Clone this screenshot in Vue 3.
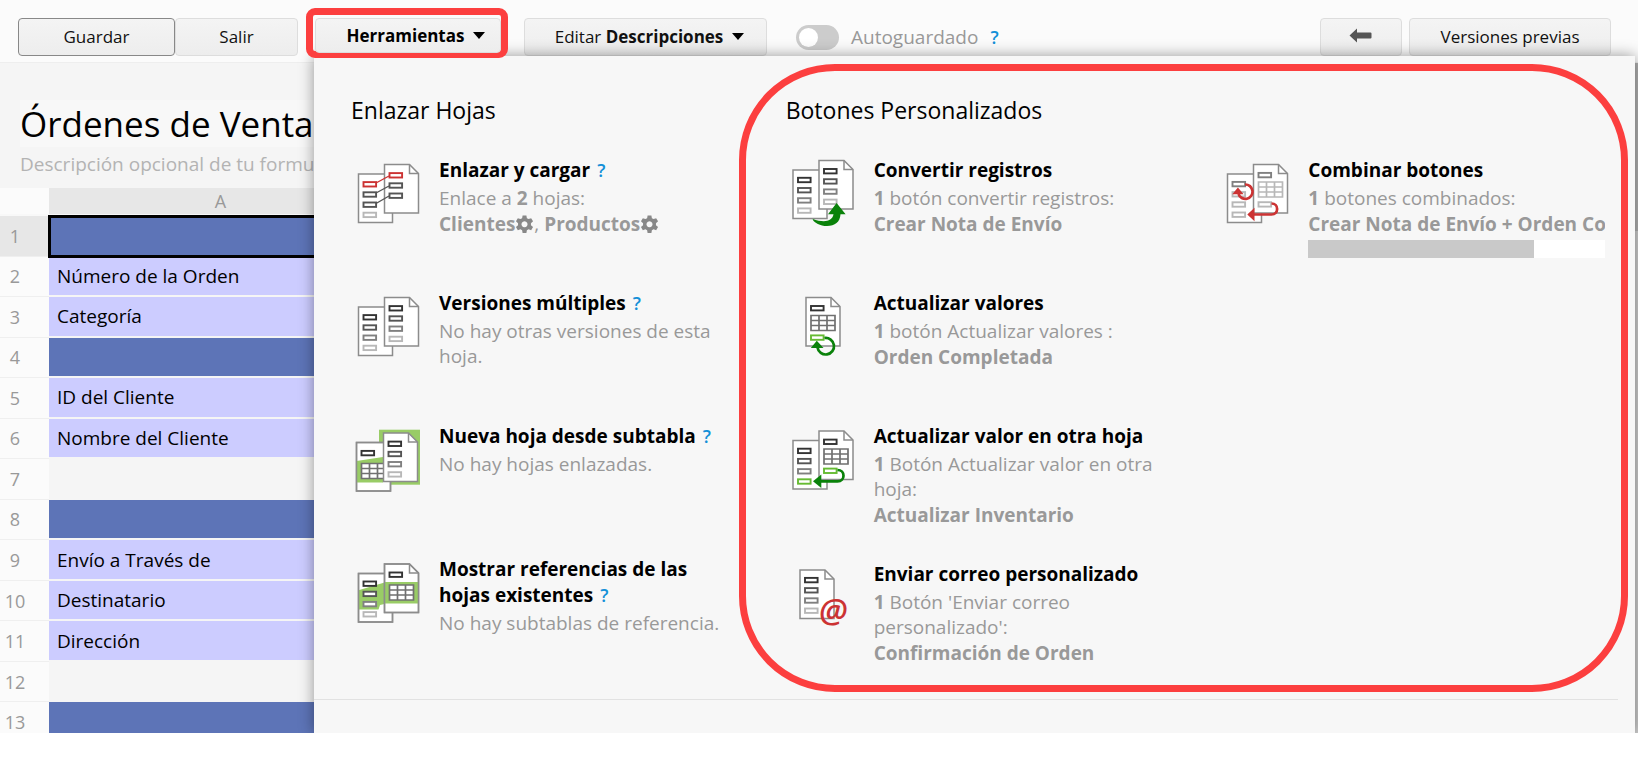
<template>
  <div class="app">
    <header class="toolbar">
      <button type="button" class="btn btn-save">Guardar</button>
      <button type="button" class="btn btn-exit">Salir</button>
      <div class="tools-wrap">
        <button type="button" class="btn btn-tools" @click="menuOpen = !menuOpen">
          <b>Herramientas</b><span class="caret"></span>
        </button>
      </div>
      <button type="button" class="btn btn-edit">Editar&nbsp;<b>Descripciones</b><span class="caret"></span></button>
      <label class="autosave">
        <input v-model="autosave" type="checkbox" class="switch" />
        <span>Autoguardado</span>
      </label>
      <a href="#" class="help">?</a>
      <span class="spacer"></span>
      <button type="button" class="btn btn-back" aria-label="Volver">
        <svg viewBox="0 0 24 16" width="24" height="16">
          <path d="M0.5 7.5 L8 0.5 V4.5 H21.5 Q22.5 4.5 22.5 5.5 V9.5 Q22.5 10.5 21.5 10.5 H8 V14.5 Z" fill="#555" />
        </svg>
      </button>
      <button type="button" class="btn btn-versions">Versiones previas</button>
    </header>

    <main class="content">
      <div class="form-head">
        <input v-model="title" type="text" class="form-title" aria-label="Título" />
        <input type="text" class="form-desc" placeholder="Descripción opcional de tu formulario" aria-label="Descripción" />
      </div>
      <table class="sheet">
        <thead>
          <tr>
            <th class="corner"></th>
            <th class="col-name">A</th>
            <th class="col-rest"></th>
          </tr>
        </thead>
        <tbody>
          <tr v-for="(row, i) in rows" :key="i" :class="{ selected: i === 0 }">
            <th class="row-no">{{ i + 1 }}</th>
            <td :class="row.type">{{ row.text }}</td>
            <td :class="row.type"></td>
          </tr>
        </tbody>
      </table>
      <span class="scroll-track"><span class="scroll-thumb"></span></span>
    </main>

    <div v-if="menuOpen" class="menu">
      <div class="menu-grid">
        <section v-for="section in sections" :key="section.title" :class="['section', section.kind]">
          <h2>{{ section.title }}</h2>
          <div class="columns">
            <div v-for="(column, c) in section.columns" :key="c" class="column">
              <article v-for="item in column" :key="item.title" class="item">
                <svg class="icon" viewBox="0 0 72 72" width="72" height="72">
                  <rect v-if="item.icon.halo" x="28" y="6.7" width="41" height="55" fill="#9c6" />
                  <g v-for="(page, p) in item.icon.pages" :key="p">
                    <path :d="pagePath(page)" fill="#fff" stroke="#8c8c8c" stroke-width="1.5" />
                    <path v-if="page.band" :d="page.band" fill="#9c6" />
                    <path v-if="page.band" :d="pagePath(page)" fill="none" stroke="#8c8c8c" stroke-width="1.5" />
                    <path
                      v-if="page.fold"
                      :d="`M${page.x + 25} ${page.y} v9 h9`"
                      fill="none"
                      stroke="#8c8c8c"
                      stroke-width="1.5"
                    />
                    <rect
                      v-for="(box, b) in page.boxes"
                      :key="b"
                      :x="page.x + 5"
                      :y="box[0] - 2.1"
                      width="12.6"
                      height="4.4"
                      fill="#fff"
                      :stroke="box[1]"
                      stroke-width="1.9"
                    />
                    <path
                      v-if="page.table"
                      :d="`M${page.x + 5} ${page.table} h24 v15 h-24 z m0 5 h24 m-24 5 h24 m-16 -10 v15 m8 -15 v15`"
                      fill="#fff"
                      :stroke="page.tableColor || '#707070'"
                      stroke-width="1.7"
                    />
                  </g>
                  <path v-if="item.icon.line" :d="item.icon.line" fill="none" :stroke="item.icon.color" stroke-width="2.7" />
                  <path v-if="item.icon.solid" :d="item.icon.solid" :fill="item.icon.color" />
                  <g v-if="item.icon.links" fill="none" stroke-width="1.4">
                    <path d="M25 26 L38 19" stroke="#c33" />
                    <path d="M25 36 L38 29 M25 46.500 L38 39" stroke="#555" />
                  </g>
                  <text v-if="item.icon.at" x="33" y="61" class="at">@</text>
                </svg>
                <div class="text">
                  <h3>{{ item.title }}<a v-if="item.help" href="#" class="help">?</a></h3>
                  <p>{{ item.lead }} <b v-if="item.count">{{ item.count }}</b> {{ item.desc }}</p>
                  <p v-if="item.links" class="links" :class="{ scrolling: item.scroll }">
                    <template v-for="(link, l) in item.links" :key="link">
                      <span v-if="l">, </span><b>{{ link }}</b><svg v-if="item.gears" class="gear" viewBox="0 0 20 20" width="19" height="19">
                        <path :d="gearPath" fill="#888" fill-rule="evenodd" />
                      </svg>
                    </template>
                  </p>
                  <div v-if="item.scroll" class="h-scroll"><span></span></div>
                </div>
              </article>
            </div>
          </div>
        </section>
      </div>
    </div>
  </div>
</template>

<script setup>
import { ref } from 'vue'

const menuOpen = ref(true)
const autosave = ref(false)
const title = ref('Órdenes de Ventas')

const rows = [
  { type: 'section-row', text: '' },
  { type: 'label-row', text: 'Número de la Orden' },
  { type: 'label-row', text: 'Categoría' },
  { type: 'section-row', text: '' },
  { type: 'label-row', text: 'ID del Cliente' },
  { type: 'label-row', text: 'Nombre del Cliente' },
  { type: 'empty-row', text: '' },
  { type: 'section-row', text: '' },
  { type: 'label-row', text: 'Envío a Través de' },
  { type: 'label-row', text: 'Destinatario' },
  { type: 'label-row', text: 'Dirección' },
  { type: 'empty-row', text: '' },
  { type: 'section-row', text: '' },
]

const dark = '#333'
const mid = '#555'
const gray = '#808080'
const light = '#b8b8b8'
const lime = '#6b3'
const green = '#0a820a'
const red = '#c33'

const gearPath =
  'M8 .5 h4 l.5 2.800 1.800 1 2.700-1 2 3.400 -2.200 1.900 v2.200 l2.200 1.900 -2 3.400 -2.700-1 -1.800 1 -.5 2.800 h-4 l-.5-2.800 -1.800-1 -2.700 1 -2-3.400 2.200-1.900 v-2.200 l-2.200-1.900 2-3.400 2.700 1 1.800-1 z M10 6.600 a3.200 3.200 0 1 0 .01 0 z'

// every page is 34 wide, the front one has a folded corner
function pagePath(page) {
  return page.fold
    ? `M${page.x} ${page.y} h25 l9 9 v39.500 h-34 z`
    : `M${page.x} ${page.y} h34 v48.500 h-34 z`
}

function fade(start, colors) {
  return colors.map((color, i) => [start + i * 10.2, color])
}

const sections = [
  {
    title: 'Enlazar Hojas',
    kind: 'link-section',
    columns: [
      [
        {
          title: 'Enlazar y cargar',
          help: true,
          lead: 'Enlace a',
          count: 2,
          desc: 'hojas:',
          links: ['Clientes', 'Productos'],
          gears: true,
          icon: {
            links: true,
            pages: [
              { x: 7.5, y: 17, boxes: fade(27.2, [red, mid, mid, light]) },
              { x: 33.5, y: 7.5, fold: true, boxes: fade(18.2, [red, mid, mid]) },
            ],
          },
        },
        {
          title: 'Versiones múltiples',
          help: true,
          desc: 'No hay otras versiones de esta hoja.',
          icon: {
            pages: [
              { x: 7.5, y: 17, boxes: fade(27.2, [dark, mid, gray, light]) },
              { x: 33.5, y: 7.5, fold: true, boxes: fade(18.2, [dark, mid, gray, light]) },
            ],
          },
        },
        {
          title: 'Nueva hoja desde subtabla',
          help: true,
          desc: 'No hay hojas enlazadas.',
          icon: {
            halo: true,
            pages: [
              { x: 5.5, y: 19.5, boxes: [[30, dark]], table: 40.5, band: 'M5.500 38 L32 34 V59.500 H5.500 z' },
              { x: 32.5, y: 10, fold: true, boxes: fade(20.7, [dark, mid, gray, light]) },
            ],
          },
        },
        {
          title: 'Mostrar referencias de las hojas existentes',
          help: true,
          desc: 'No hay subtablas de referencia.',
          icon: {
            pages: [
              {
                x: 7.5,
                y: 17.5,
                boxes: fade(27.6, [dark, mid, gray, light]),
                band: 'M7.500 34.300 L33.500 26.500 V48 L29 49 L27.500 53.500 H7.500 z',
              },
              { x: 33.5, y: 8, fold: true, boxes: [[18.6, dark]], table: 29, band: 'M33.500 26 h34 v21.500 h-34 z' },
            ],
          },
        },
      ],
    ],
  },
  {
    title: 'Botones Personalizados',
    kind: 'button-section',
    columns: [
      [
        {
          title: 'Convertir registros',
          count: 1,
          desc: 'botón convertir registros:',
          links: ['Crear Nota de Envío'],
          icon: {
            pages: [
              { x: 7, y: 13, boxes: fade(22.9, [dark, mid, gray, light]) },
              { x: 33, y: 3.5, fold: true, boxes: fade(14.1, [dark, mid, gray, light]) },
            ],
            color: green,
            solid: 'M50.600 46 L59.600 57.300 H54.500 C54 65.300 49 69 41 69 C34 69 28.500 65.700 26.800 62.700 V62 C37 65.700 46 65.300 47.500 57.300 H42 z',
          },
        },
        {
          title: 'Actualizar valores',
          count: 1,
          desc: 'botón Actualizar valores :',
          links: ['Orden Completada'],
          icon: {
            pages: [{ x: 20, y: 7.5, fold: true, boxes: [[18.1, dark], [47.5, lime]], table: 25.5 }],
            color: green,
            line: 'M38.500 48 A8.300 8.300 0 1 1 31.500 57.500',
            solid: 'M30.800 50.700 L37.500 58.100 H24.800 z',
          },
        },
        {
          title: 'Actualizar valor en otra hoja',
          count: 1,
          desc: 'Botón Actualizar valor en otra hoja:',
          links: ['Actualizar Inventario'],
          icon: {
            pages: [
              { x: 7, y: 17.5, boxes: fade(27.8, [dark, mid, gray, lime]) },
              { x: 33, y: 8, fold: true, boxes: [[18.7, dark], [47.7, lime]], table: 26 },
            ],
            color: green,
            line: 'M51.500 47 C59.500 47 59.500 58.300 51.500 58.300 H34',
            solid: 'M27 58.300 L35.300 51.500 V65 z',
          },
        },
        {
          title: 'Enviar correo personalizado',
          count: 1,
          desc: "Botón 'Enviar correo personalizado':",
          links: ['Confirmación de Orden'],
          icon: {
            at: true,
            pages: [{ x: 14, y: 9, fold: true, boxes: fade(19, [dark, mid, gray, light]) }],
          },
        },
      ],
      [
        {
          title: 'Combinar botones',
          count: 1,
          desc: 'botones combinados:',
          links: ['Crear Nota de Envío + Orden Completada'],
          scroll: true,
          icon: {
            pages: [
              { x: 7.5, y: 17, boxes: fade(27, [gray, light, light, light]) },
              { x: 33.5, y: 7.5, fold: true, boxes: [[18, gray], [47.3, light]], table: 25, tableColor: '#b8b8b8' },
            ],
            color: red,
            line: 'M25 27.500 A7.200 7.200 0 1 1 18.500 37 M51.500 46.500 C59 46.500 59 57.500 51.500 57.500 H34',
            solid: 'M17.900 30.500 L23.600 37.300 H12.300 z M27.300 57.500 L34.500 50.800 V64.300 z',
          },
        },
      ],
    ],
  },
]
</script>

<style>
body {
  margin: 0;
  background: #fff;
}
</style>

<style scoped>
.app {
  position: relative;
  display: flex;
  flex-direction: column;
  height: calc(100vh - 48px);
  overflow: hidden;
  background: #f5f5f5;
  color: #000;
  font-family: "Open Sans", "Noto Sans", sans-serif;
  font-size: 19px;
}

button,
input {
  box-sizing: border-box;
  font: inherit;
  color: inherit;
}

.toolbar {
  display: flex;
  align-items: flex-start;
  box-sizing: border-box;
  height: 63px;
  flex-shrink: 0;
  padding: 18px 27px 0 18px;
  background: #fbfbfb;
  border-bottom: 1px solid #eee;
}

.btn {
  display: flex;
  align-items: center;
  justify-content: center;
  height: 38px;
  padding: 0 0 2px;
  border: 1px solid #ddd;
  border-radius: 4px;
  background: linear-gradient(#f4f4f4, #ededed);
  color: #111;
  font-size: 17px;
  white-space: nowrap;
  cursor: pointer;
}

.btn-save {
  width: 157px;
  border-color: #888;
}

.btn-exit {
  width: 123px;
}

.tools-wrap {
  position: relative;
  z-index: 3;
  box-sizing: border-box;
  width: 202px;
  height: 50px;
  margin: -10px 16px 0 8px;
  padding: 3px 0 0 2px;
  border: 7px solid #fc3f3f;
  border-radius: 9px;
}

.btn-tools {
  width: 100%;
  height: 35px;
  padding: 0 0 0 16px;
  color: #000;
}

.btn-edit {
  width: 243px;
  padding-left: 8px;
}

.caret {
  margin-left: 9px;
  border: 6px solid transparent;
  border-top: 7px solid #000;
  border-bottom: 0;
}

.autosave {
  display: flex;
  align-items: center;
  gap: 12px;
  height: 38px;
  margin-left: 29px;
  color: #999;
}

.switch {
  appearance: none;
  width: 43px;
  height: 25px;
  margin: 0;
  padding: 3px;
  border-radius: 13px;
  background: #ccc;
}

.switch::before {
  content: "";
  display: block;
  width: 19px;
  height: 19px;
  border-radius: 50%;
  background: #fff;
}

.switch:checked {
  background: #1490d8;
}

.help {
  color: #1490d8;
  font-size: 18px;
  font-weight: 600;
  text-decoration: none;
}

.toolbar .help {
  margin-left: 12px;
  line-height: 38px;
}

.spacer {
  flex: 1;
}

.btn-back {
  width: 82px;
  margin-right: 7px;
}

.btn-versions {
  width: 202px;
}

.content {
  position: relative;
  flex: 1;
}

.form-head {
  box-sizing: border-box;
  height: 125px;
  padding: 37px 0 0 20px;
}

.form-title,
.form-desc {
  display: block;
  width: 100%;
  padding: 0;
  border: 0;
  background: transparent;
}

.form-title {
  height: 47px;
  background: #f8f8f8;
  font-size: 35px;
}

.form-desc {
  height: 34px;
}

.form-desc::placeholder {
  color: #b3b3b3;
  opacity: 1;
}

.sheet {
  width: 100%;
  height: 555px;
  border-collapse: separate;
  border-spacing: 0;
  table-layout: fixed;
}

.sheet th {
  padding: 0;
  font-size: 18px;
  font-weight: 400;
  color: #999;
}

.sheet thead th {
  height: 26px;
  border-bottom: 2px solid #f8f8f8;
  line-height: 26px;
}

.sheet tbody tr {
  height: 40px;
  line-height: 24px;
}

.corner {
  width: 49px;
  background: #fbfbfb;
}

.col-name {
  width: 343px;
  background: #e7e7e7;
}

.col-rest {
  background: #e7e7e7;
}

.sheet .row-no {
  padding-right: 19px;
  background: #fbfbfb;
  border-bottom: 1px solid #efefef;
}

.sheet .selected .row-no {
  background: #e7e7e7;
}

.sheet td {
  padding: 0 8px;
  border-bottom: 2px solid #f5f5f5;
}

.sheet .section-row {
  background: #5d74b7;
}

.sheet .label-row {
  background: #ccf;
}

.sheet .selected td {
  border-bottom: 0;
  outline: 3px solid #000;
  outline-offset: -2px;
}

.scroll-track {
  position: absolute;
  inset: 0 0 0 auto;
  width: 3px;
  background: #ccc;
}

.scroll-thumb {
  display: block;
  height: 168px;
  background: #b0b0b0;
}

.menu {
  position: absolute;
  inset: 56px 3px 0 314px;
  z-index: 2;
  background: #f7f7f7;
  box-shadow: 0 0 14px rgba(0, 0, 0, 0.4);
}

.menu-grid {
  position: relative;
  display: grid;
  grid-template-columns: 1fr 2fr;
  margin-right: 17px;
  padding-bottom: 32px;
  border-bottom: 1px solid #e2e2e2;
}

.section {
  min-width: 0;
}

/* highlighted area round the custom buttons */
.button-section::after {
  content: "";
  position: absolute;
  inset: 8px -10px 7px calc(100% * 1 / 3 - 10px);
  border: 7px solid #fc3f3f;
  border-radius: 96px;
  pointer-events: none;
}

.section h2 {
  margin: 38px 0 31px 37px;
  font-size: 23px;
  font-weight: 400;
  line-height: 32px;
}

.columns {
  display: grid;
  grid-auto-flow: column;
  grid-auto-columns: minmax(0, 1fr);
}

.column {
  display: flex;
  flex-direction: column;
  gap: 32px;
  padding: 0 13px 0 37px;
}

.item {
  display: flex;
  gap: 16px;
  min-height: 101px;
}

.icon {
  flex-shrink: 0;
}

.at {
  fill: #c33;
  font-size: 33px;
  font-style: italic;
  font-weight: 600;
}

.text {
  flex: 1;
  min-width: 0;
}

.item h3 {
  margin: 0 0 3px;
  font-size: 19px;
  font-weight: 700;
  line-height: 26px;
}

.item h3 .help {
  margin-left: 7px;
}

.item p {
  margin: 0;
  color: #999;
  line-height: 25px;
}

.item .links {
  line-height: 27px;
  white-space: nowrap;
}

.scrolling {
  overflow: hidden;
}

.gear {
  vertical-align: -3px;
}

.h-scroll {
  height: 18px;
  margin-top: 2px;
  background: #fff;
}

.h-scroll span {
  display: block;
  width: 76%;
  height: 100%;
  background: #c9c9c9;
}
</style>
